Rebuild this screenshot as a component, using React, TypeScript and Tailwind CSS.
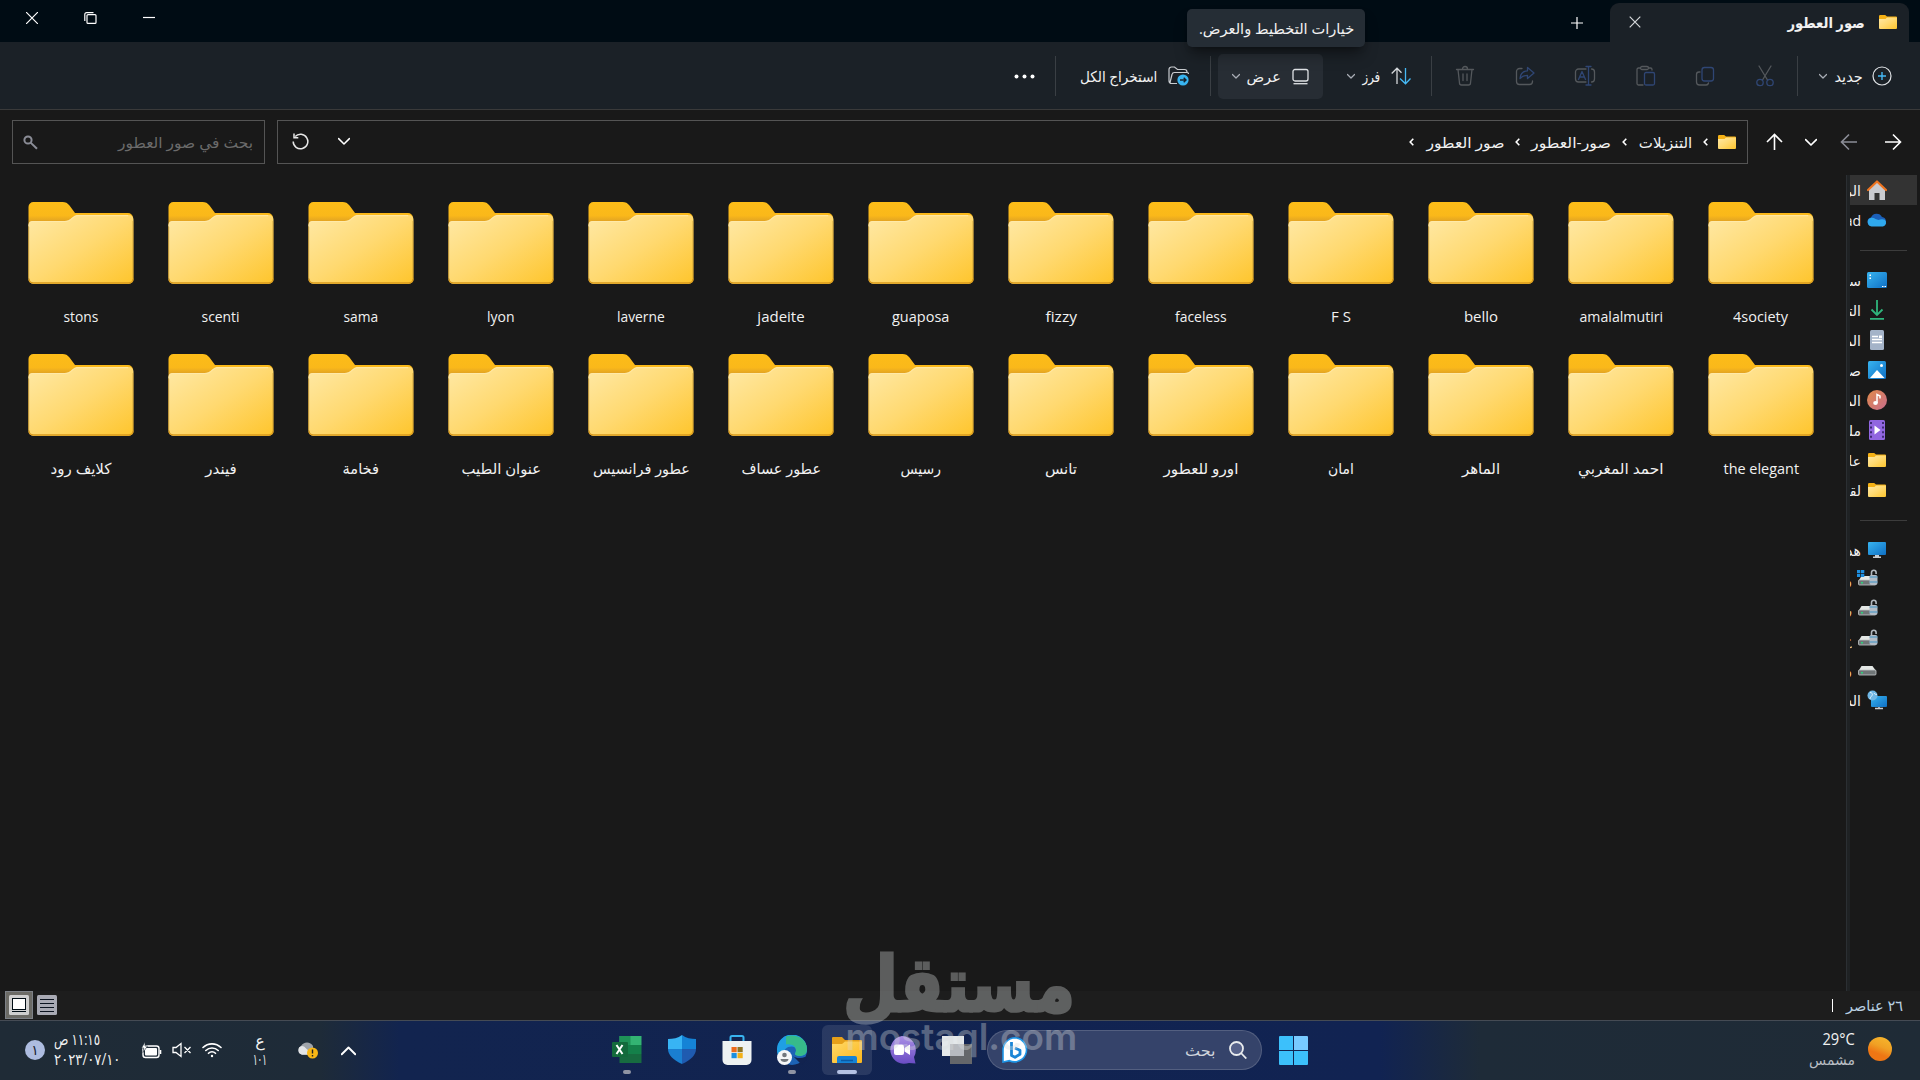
import React, { useLayoutEffect, useRef, useState } from "react";

/* Text squeezed or stretched horizontally so that it spans exactly w pixels. */
function Fit({ w, children, className = "" }: { w: number; children: React.ReactNode; className?: string }) {
  const ref = useRef<HTMLSpanElement>(null);
  const [scale, setScale] = useState(1);
  useLayoutEffect(() => {
    if (ref.current) setScale(w / ref.current.offsetWidth);
  }, [w]);
  return (
    <span className={`inline-flex shrink-0 justify-center ${className}`} style={{ width: w }}>
      <span ref={ref} className="inline-block shrink-0 whitespace-nowrap" style={{ transform: `scaleX(${scale})` }}>
        {children}
      </span>
    </span>
  );
}

function BigFolder() {
  return (
    <svg width="106" height="84" viewBox="0 0 106 84" className="shrink-0">
      <path d="M.5 6a5 5 0 0 1 5-5h29c3 0 5 1 7 3.500L47 12h53a5 5 0 0 1 5 5v60H.5z" fill="url(#fBack)" />
      <path d="M.5 24a4 4 0 0 1 4-4h32c3 0 5-1 7-3l2-1.500c1.500-1 2.500-1.500 4-1.500H101a4.500 4.500 0 0 1 4.500 4.500V78a5 5 0 0 1-5 5H5.500a5 5 0 0 1-5-5z" fill="url(#fFront)" />
      <path d="M1 77.500c0 3 2 4.500 4.500 4.500h95c2.500 0 4.500-1.500 4.500-4.500" fill="none" stroke="#d99a1c" strokeWidth="1.300" />
      <path d="M1 25c0-3 1.500-4.500 4-4.500h32c3 0 5-1 7-3l2-1.500c1.500-1 2.500-1.300 4-1.300h50" fill="none" stroke="#ffe9a8" strokeWidth="1" />
      <path d="M105 20v57M.7 26v51" stroke="#b8892a" strokeWidth=".8" opacity=".7" />
    </svg>
  );
}

function SmallFolder() {
  return (
    <svg width="20" height="16" viewBox="0 0 20 16" className="shrink-0">
      <path d="M1 2.200A1.200 1.200 0 0 1 2.200 1h5l1.800 1.500h9a1 1 0 0 1 1 1V8H1z" fill="#f5b115" />
      <path d="M1 5h6.500L9 3.500h10V14a1 1 0 0 1-1 1H2a1 1 0 0 1-1-1z" fill="url(#fFront)" />
    </svg>
  );
}

function Chev({ s = 8, c = "#a9adb5", sw = 1.3, up = false }: { s?: number; c?: string; sw?: number; up?: boolean }) {
  return (
    <svg width={s} height={s} viewBox="0 0 10 10" fill="none" stroke={c} strokeWidth={(sw * 10) / s} className="shrink-0">
      <path d={up ? "M.5 7.500 5 3l4.500 4.500" : "M.5 3 5 7.500 9.500 3"} strokeLinecap="round" strokeLinejoin="round" />
    </svg>
  );
}

function Crumb() {
  return (
    <svg width="5" height="8" viewBox="0 0 5 8" fill="none" stroke="#fff" strokeWidth="1.600" className="shrink-0">
      <path d="M4.300.8 1.200 4l3.100 3.200" />
    </svg>
  );
}

function Divider({ className }: { className: string }) {
  return <div className={`h-10 w-px shrink-0 bg-[#3a3f44] ${className}`} />;
}

function Ico({ children, s = 24 }: { children: React.ReactNode; s?: number }) {
  return (
    <svg width={s} height={s} viewBox={`0 0 ${s} ${s}`} fill="none" strokeWidth="1.300" strokeLinecap="round" strokeLinejoin="round" className="shrink-0">
      {children}
    </svg>
  );
}

const G = "#54585c";
const B = "#2f4674";

function TitleBar() {
  return (
    <header className="flex h-[42px] items-end bg-[#000c14] pr-[11px]">
      <div className="flex h-[39px] w-[299px] items-center rounded-t-[9px] bg-[#1b2127] pb-px pr-[11px]">
        <SmallFolder />
        <Fit w={77} className="mr-[13px] text-[15px] font-bold leading-[20px]">صور العطور</Fit>
        <svg width="12" height="12" viewBox="0 0 12 12" stroke="#d5d8db" strokeWidth="1.200" className="mr-[147px]">
          <path d="M.7.7l10.600 10.600M11.300.7.7 11.300" />
        </svg>
      </div>
      <svg width="12" height="12" viewBox="0 0 12 12" stroke="#fff" strokeWidth="1.200" className="mb-[13px] mr-[27px]">
        <path d="M6 0v12M0 6h12" />
      </svg>
      <div className="mr-auto flex h-[42px] items-start gap-[46px] pl-[26px] pt-3">
        <svg width="12" height="12" viewBox="0 0 12 12" stroke="#fff" strokeWidth="1.200"><path d="M0 5.500h12" /></svg>
        <svg width="13" height="12" viewBox="0 0 13 12" stroke="#fff" strokeWidth="1.200" fill="none">
          <rect x="3" y="2.600" width="9" height="8.800" rx="1" />
          <path d="M.8 9V2.500C.8 1.300 1.500.6 2.700.6H9.500" />
        </svg>
        <svg width="12" height="12" viewBox="0 0 12 12" stroke="#fff" strokeWidth="1.200"><path d="M0 0l12 12M12 0 0 12" /></svg>
      </div>
    </header>
  );
}

function CommandBar() {
  return (
    <div className="flex h-[68px] items-center border-b border-[#3a3a3a] bg-[#1b2127] pr-[28px] pt-px">
      <svg width="20" height="20" viewBox="0 0 20 20" fill="none" className="shrink-0">
        <circle cx="10" cy="10" r="9" stroke="#dfe2e5" strokeWidth="1.200" />
        <path d="M10 6v8M6 10h8" stroke="#46b9f5" strokeWidth="1.400" />
      </svg>
      <Fit w={28} className="mr-[9px]">جديد</Fit>
      <span className="mr-2 flex"><Chev /></span>
      <Divider className="mr-[21px]" />
      <div className="mr-5 flex gap-9">
        <Ico>
          <path d="M6 2l8.500 14M18 2 9.500 16" stroke={G} />
          <circle cx="7" cy="18.500" r="3.200" stroke={B} /><circle cx="17" cy="18.500" r="3.200" stroke={B} />
        </Ico>
        <Ico>
          <path d="M7 8H6a2.500 2.500 0 0 0-2.500 2.500V18A3 3 0 0 0 6.500 21H13a2.500 2.500 0 0 0 2.500-2" stroke={G} />
          <rect x="9" y="3.500" width="11.500" height="13.500" rx="2.500" stroke={B} />
        </Ico>
        <Ico>
          <path d="M7 4H5.500A1.500 1.500 0 0 0 4 5.500v14A1.500 1.500 0 0 0 5.500 21H10M16 4h1.500A1.500 1.500 0 0 1 19 5.500V6" stroke={G} />
          <rect x="7.500" y="2.500" width="8" height="3" rx="1.500" stroke={G} />
          <rect x="11.500" y="8.500" width="10" height="12.500" rx="1.500" stroke={B} />
        </Ico>
        <Ico>
          <path d="M13 5H5.500A3 3 0 0 0 2.500 8v7a3 3 0 0 0 3 3H13M18.500 5a3 3 0 0 1 3 3v7a3 3 0 0 1-3 3" stroke={G} />
          <path d="M5.500 15.500 9 7.500l3.500 8M6.700 13h4.600M15.500 3v18M13 2.500h5M13 21h5" stroke={B} />
        </Ico>
        <Ico>
          <path d="M9 4.500H6.500A3 3 0 0 0 3.500 7.500v10a3 3 0 0 0 3 3h10a3 3 0 0 0 3-3V17" stroke={G} />
          <path d="M14.500 3.500 21 9l-6.500 5.500v-3.200c-3.500 0-5.500 1-7.500 3.200.3-4.500 2.800-7.300 7.500-7.700z" stroke={B} />
        </Ico>
        <Ico>
          <path d="M3.500 5.500h17M5 5.500l1.500 13.500A2 2 0 0 0 8.500 21h7a2 2 0 0 0 2-2L19 5.500M9.500 5a2.500 2.500 0 0 1 5 0M10 10v6.500M14 10v6.500" stroke={G} />
        </Ico>
      </div>
      <Divider className="mr-[21px]" />
      <svg width="20" height="18" viewBox="0 0 20 18" fill="none" strokeWidth="1.300" className="mr-5 shrink-0">
        <path d="M6 17V1.500M.7 6.500 6 1.200l4.500 4.500" stroke="#d5d8db" />
        <path d="M14.500 1v15.500M9 11.500l5.500 5.300 5-5.300" stroke="#46b9f5" />
      </svg>
      <Fit w={18} className="mr-[11px]">فرز</Fit>
      <span className="mr-[7px] flex"><Chev /></span>
      <div className="mr-6 flex h-[45px] w-[105px] items-center rounded-[5px] bg-[#272d34] pr-[14px]">
        <svg width="17" height="17" viewBox="0 0 17 17" fill="none" stroke="#dfe2e5" strokeWidth="1.300">
          <rect x="1" y="1.500" width="15" height="11.500" rx="2" /><path d="M1.500 15.700h14" />
        </svg>
        <Fit w={34} className="mr-[11px]">عرض</Fit>
        <span className="mr-[7px] flex"><Chev /></span>
      </div>
      <Divider className="mr-[7px]" />
      <svg width="21" height="20" viewBox="0 0 21 20" fill="none" className="mr-[21px] shrink-0">
        <path d="M9 17.500H3.500a2.500 2.500 0 0 1-2.500-2.500V3.500A2.500 2.500 0 0 1 3.500 1h3l3 2.500h7A2.500 2.500 0 0 1 19 6M2 16.500 4 8.500A2.500 2.500 0 0 1 6.500 6.500h12.500a1.500 1.500 0 0 1 1.500 1.500" stroke="#c9ccd0" strokeWidth="1.200" />
        <circle cx="15" cy="14" r="5.600" fill="#38b4f0" />
        <path d="M12 14h6M15.700 11.700 18 14l-2.300 2.300" stroke="#14222c" strokeWidth="1.400" />
      </svg>
      <Fit w={77} className="mr-[11px]">استخراج الكل</Fit>
      <Divider className="mr-[24px]" />
      <svg width="21" height="5" viewBox="0 0 21 5" fill="#fff" className="mr-5">
        <circle cx="2.500" cy="2.500" r="2" /><circle cx="10.500" cy="2.500" r="2" /><circle cx="18.500" cy="2.500" r="2" />
      </svg>
    </div>
  );
}

function AddressRow() {
  return (
    <div className="flex h-[65px] items-center pb-px pr-[18px]">
      <svg width="18" height="18" viewBox="0 0 18 18" fill="none" stroke="#fff" strokeWidth="1.600"><path d="M1 9h15.500M9 1.500 16.500 9 9 16.500" /></svg>
      <svg width="18" height="18" viewBox="0 0 18 18" fill="none" stroke="#8b8d97" strokeWidth="1.600" className="mr-[26px]"><path d="M17 9H1.500M9 1.500 1.500 9 9 16.500" /></svg>
      <span className="mr-[23px] flex"><Chev s={12} c="#fff" sw={1.7} /></span>
      <svg width="17" height="18" viewBox="0 0 17 18" fill="none" stroke="#fff" strokeWidth="1.600" className="mr-[22px]"><path d="M8.500 17V1.500M1 9l7.500-7.500L16 9" /></svg>
      <div className="mr-[18px] flex h-[44px] w-[1471px] items-center border border-[#545454] pr-[10px]">
        <SmallFolder />
        <span className="mr-[9px] flex"><Crumb /></span>
        <Fit w={53} className="mb-px mr-[11px]">التنزيلات</Fit>
        <span className="mr-[12px] flex"><Crumb /></span>
        <Fit w={80} className="mb-px mr-[11px]">صور-العطور</Fit>
        <span className="mr-[11px] flex"><Crumb /></span>
        <Fit w={78} className="mb-px mr-[11px]">صور العطور</Fit>
        <span className="mr-[12px] flex"><Crumb /></span>
        <div className="mb-0.5 mr-auto flex items-center gap-[29px] pl-[14px]">
          <Chev s={12} c="#fff" sw={1.5} />
          <svg width="17" height="17" viewBox="0 0 17 17" fill="none" stroke="#e8e8e8" strokeWidth="1.500">
            <path d="M3.200 3.500a7.300 7.300 0 1 1-2 5" /><path d="M2 .5v4.200h4.300" />
          </svg>
        </div>
      </div>
      <div className="mr-3 flex h-[44px] w-[253px] items-center justify-between border border-[#545454] pl-[10px] pr-[11px]">
        <Fit w={135} className="text-[#6b6b6b]">بحث في صور العطور</Fit>
        <svg width="15" height="15" viewBox="0 0 15 15" fill="none" stroke="#8b8d97" strokeWidth="2">
          <circle cx="5" cy="5" r="3.600" /><path d="M7.600 7.600 14 13.800" />
        </svg>
      </div>
    </div>
  );
}

const rowOne: [string, number][] = [
  ["4society", 55], ["amalalmutiri", 84], ["bello", 34], ["F S", 20], ["faceless", 52], ["fizzy", 31], ["guaposa", 57],
  ["jadeite", 47], ["laverne", 48], ["lyon", 28], ["sama", 35], ["scenti", 38], ["stons", 35],
];
const rowTwo: [string, number][] = [
  ["the elegant", 76], ["احمد المغربي", 85], ["الماهر", 38], ["امان", 26], ["اورو للعطور", 75], ["تانس", 32], ["رسيس", 40],
  ["عطور عساف", 80], ["عطور فرانسيس", 97], ["عنوان الطيب", 80], ["فخامة", 37], ["فيندر", 31], ["كلايف رود", 61],
];

function Drive({ lock = false, win = false }: { lock?: boolean; win?: boolean }) {
  return (
    <svg width="22" height="20" viewBox="0 0 22 20" className="mb-1 shrink-0">
      <path d="M4.500 8h11l3.500 5H1.500z" fill="#e4e8e6" />
      <rect x="1.500" y="12" width="17.500" height="5" rx="1" fill="#6f7577" stroke="#c3c7c8" strokeWidth=".8" />
      <rect x="4" y="14" width="2" height="1.500" fill="#2fd07c" />
      {lock && (
        <>
          <path d="M14.500 9V4.500a2.300 2.300 0 0 1 4.600 0V6" fill="none" stroke="#b3b9bf" strokeWidth="1.600" />
          <rect x="12.500" y="7" width="8" height="10" rx="2" fill="#b4bcc5" />
          <path d="M12.500 9h8M12.500 14h8" stroke="#3e93c4" strokeWidth="1" />
        </>
      )}
      {win && <path d="M0 2h3.300v3H0zM4 2h3.300v3H4zM0 5.700h3.300V9H0zM4 5.700h3.300V9H4z" fill="#1e8fe0" />}
    </svg>
  );
}

const navIcons: Record<string, React.ReactNode> = {
  home: (
    <svg width="20" height="20" viewBox="0 0 20 20">
      <path d="M2 8.500 10 1.500l8 7V20h-5.500v-7h-5v7H2z" fill="#c9cbd0" />
      <path d="M1 10 10 1.500 19 10" fill="none" stroke="#ee7420" strokeWidth="2.200" strokeLinecap="round" strokeLinejoin="round" />
    </svg>
  ),
  cloud: (
    <svg width="20" height="14" viewBox="0 0 20 14">
      <path d="M4.500 13A4.300 4.300 0 0 1 4 4.500 6 6 0 0 1 15 4a4.600 4.600 0 0 1 .5 9z" fill="#1b5fb8" />
      <path d="M4.500 13.500a4.500 4.500 0 0 1-1-8.600c2-.4 3.500 0 5 1l3 1.200c1.500-.8 4-1.300 6.300-.3a3.900 3.900 0 0 1-1.800 6.700z" fill="#2fa8ec" />
    </svg>
  ),
  desktop: (
    <svg width="20" height="16" viewBox="0 0 20 16">
      <rect width="20" height="16" rx="1.500" fill="url(#blueG)" /><path d="M2.500 2.500h1.500v1.500H2.500zM2.500 5.500h1.500v1.500H2.500z" fill="#fff" /><path d="M15 14.500h1.500M17.500 14.500H19" stroke="#fff" />
    </svg>
  ),
  down: (
    <svg width="16" height="20" viewBox="0 0 16 20" fill="none" stroke="#2fb67c" strokeWidth="1.800"><path d="M8 0v15M2.500 9.500 8 15l5.500-5.500M1 18.800h14" /></svg>
  ),
  docs: (
    <svg width="14" height="20" viewBox="0 0 14 20">
      <rect width="14" height="20" rx="1.500" fill="#a4b3c8" /><path d="M2 6.500h6M2 9.500h10M2 12.500h10" stroke="#fff" strokeWidth="1.300" /><rect x="9" y="5.500" width="3" height="2.500" fill="#fff" />
    </svg>
  ),
  pics: (
    <svg width="18" height="18" viewBox="0 0 18 18">
      <rect width="18" height="18" rx="1.500" fill="url(#blueG)" /><path d="M2 17 9 9l7.500 8z" fill="#fff" /><circle cx="13.500" cy="4.500" r="1.500" fill="#fff" />
    </svg>
  ),
  music: (
    <svg width="20" height="20" viewBox="0 0 20 20">
      <circle cx="10" cy="10" r="10" fill="url(#musG)" /><ellipse cx="8.500" cy="13" rx="2.300" ry="2" fill="#fff" /><path d="M10 13V4.500l3 1.500v2.500" fill="none" stroke="#fff" strokeWidth="1.500" />
    </svg>
  ),
  video: (
    <svg width="16" height="20" viewBox="0 0 16 20">
      <rect width="16" height="20" rx="1.500" fill="#9166e0" /><path d="M2 2v17M14 2v17" stroke="#3f2b73" strokeWidth="2" strokeDasharray="2 2.600" /><path d="M5.500 5.500 11.500 10l-6 4.500z" fill="#fff" />
    </svg>
  ),
  folder: <SmallFolder />,
  pc: (
    <svg width="18" height="16" viewBox="0 0 18 16">
      <rect width="18" height="13" rx="1" fill="url(#blueG)" /><path d="M7 13h4v1.500h2V16H5v-1.500h2z" fill="#c9cdd1" />
    </svg>
  ),
  net: (
    <svg width="20" height="20" viewBox="0 0 20 20">
      <rect x="4" y="6" width="16" height="11" rx="1" fill="url(#blueG)" /><path d="M8 18.500h8M12 17v2" stroke="#c9cdd1" strokeWidth="1.500" />
      <circle cx="5.500" cy="5.500" r="5" fill="#6fb7e6" /><path d="M3 2.500c2 0 3 1.500 2 3S3 7.500 3 9M7 3c1 1.500 2 1.500 3 1.500" stroke="#e6f2fa" fill="none" />
    </svg>
  ),
};

function NavItem({ icon, label, active = false }: { icon: string; label: string; active?: boolean }) {
  return (
    <div className={`flex h-[30px] shrink-0 items-center pr-[30px] ${active ? "bg-[#333333]" : ""}`}>
      <span className="flex w-5 shrink-0 justify-center">{navIcons[icon]}</span>
      <span className="mr-[6px] mt-px w-[11px] shrink-0 overflow-hidden whitespace-nowrap text-[14px] leading-[22px]">{label}</span>
    </div>
  );
}

function DriveItem({ label, lock, win }: { label: string; lock?: boolean; win?: boolean }) {
  return (
    <div className="flex h-[30px] shrink-0 items-center pr-[38px]">
      <Drive lock={lock} win={win} />
      <span className="mr-[5px] w-[2px] overflow-hidden whitespace-nowrap text-[14px] leading-[22px] text-[#e9c38d]">{label}</span>
    </div>
  );
}

function Sidebar() {
  return (
    <nav className="flex w-[67px] shrink-0 flex-col">
      <NavItem icon="home" label="الرئيسية" active />
      <div className="flex h-[30px] shrink-0 items-center pr-[30px]">
        <span className="flex w-5 justify-center">{navIcons.cloud}</span>
        <span dir="ltr" className="mr-[6px] mt-px flex w-[11px] justify-end overflow-hidden text-[14px] leading-[22px]"><span className="shrink-0">ahmad</span></span>
      </div>
      <div className="mb-[14px] mr-[10px] mt-[15px] h-px w-[47px] shrink-0 bg-[#3c3c3c]" />
      <NavItem icon="desktop" label="سطح المكتب" />
      <NavItem icon="down" label="التنزيلات" />
      <NavItem icon="docs" label="المستندات" />
      <NavItem icon="pics" label="صور" />
      <NavItem icon="music" label="الموسيقى" />
      <NavItem icon="video" label="ملفات" />
      <NavItem icon="folder" label="عام" />
      <NavItem icon="folder" label="لقطات" />
      <div className="mb-[14px] mr-[10px] mt-[15px] h-px w-[47px] shrink-0 bg-[#3c3c3c]" />
      <NavItem icon="pc" label="هذا الكمبيوتر" />
      <DriveItem label="و" lock win />
      <DriveItem label="ر" lock />
      <DriveItem label="ج" lock />
      <DriveItem label="و" />
      <NavItem icon="net" label="الشبكة" />
    </nav>
  );
}

function FolderRow({ items }: { items: [string, number][] }) {
  return (
    <>
      {items.map(([name, w]) => (
        <div key={name} className="flex h-[152px] flex-col items-center">
          <BigFolder />
          <Fit w={w} className="mt-[21px] text-[15px] leading-[20px]">{name}</Fit>
        </div>
      ))}
    </>
  );
}

function StatusBar() {
  return (
    <div className="flex h-[29px] items-center bg-[#1d1d1d] pb-px pr-[17px]">
      <Fit w={57} className="text-[15px] leading-[20px] text-[#b9d0e2]">٢٦ عناصر</Fit>
      <div className="mr-[13px] h-[13px] w-px bg-white" />
      <div className="mr-auto flex items-center gap-1 pl-[5px]">
        <svg width="20" height="20" viewBox="0 0 20 20">
          <rect width="20" height="20" rx="1.500" fill="#a9aab4" /><path d="M3 4.500h14M3 8.500h14M3 12.500h14M3 16.500h14" stroke="#0c1420" />
        </svg>
        <div className="flex h-7 w-7 items-center justify-center border border-[#7d8187] bg-[#6c6b66]">
          <svg width="20" height="20" viewBox="0 0 20 20">
            <rect width="20" height="20" rx="1.500" fill="#cfcfcf" /><rect x="3.500" y="3.500" width="13" height="11" fill="#fff" stroke="#000c14" /><path d="M3 16.500h14" stroke="#000c14" />
          </svg>
        </div>
      </div>
    </div>
  );
}

function AppSlot({ children, active = false, dot = false }: { children: React.ReactNode; active?: boolean; dot?: boolean }) {
  return (
    <div className={`flex h-[50px] w-[50px] flex-col items-center rounded-md pt-[10px] ${active ? "bg-white/10" : ""}`}>
      <svg width="30" height="30" viewBox="0 0 30 30" className="shrink-0">{children}</svg>
      {dot && <div className="mt-[5px] h-1 w-2 shrink-0 rounded-full bg-[#8f94a3]" />}
      {active && <div className="mt-[5px] h-1 w-5 shrink-0 rounded-full bg-[#b4c2e4]" />}
    </div>
  );
}

function Taskbar() {
  return (
    <footer className="flex h-[60px] items-center border-t border-[#454b54] bg-[linear-gradient(90deg,#1f2b36_0px,#1e2b38_320px,#12244f_400px,#112352_1380px,#1e2b38_1480px,#1f2b36_100%)] pb-px pr-[28px]">
      <svg width="24" height="24" viewBox="0 0 24 24" className="mb-[3px] shrink-0"><circle cx="12" cy="12" r="12" fill="url(#sunG)" /></svg>
      <div className="mb-[3px] mr-[13px] flex w-[46px] flex-col items-start">
        <Fit w={32} className="text-[16px] leading-[22px]"><span dir="ltr">29°C</span></Fit>
        <Fit w={46} className="text-[14px] leading-[20px] text-[#b9bec4]">مشمس</Fit>
      </div>
      <svg width="29" height="29" viewBox="0 0 29 29" className="mr-[501px] shrink-0">
        <path d="M0 1a1 1 0 0 1 1-1h13v14H0zM0 15h14v14H1a1 1 0 0 1-1-1zM15 15h14v13a1 1 0 0 1-1 1H15z" fill="#3cc0fb" /><path d="M15 0h13a1 1 0 0 1 1 1v13H15z" fill="#78caff" />
      </svg>
      <div className="mr-[17px] flex h-10 w-[275px] shrink-0 items-center rounded-full border border-white/15 bg-[#35436a] pl-[14px] pr-[14px]">
        <svg width="18" height="18" viewBox="0 0 18 18" fill="#56628a" stroke="#e9ecee" strokeWidth="1.800"><circle cx="7.500" cy="7.500" r="6.500" /><path d="m12 12 5.300 5.500" /></svg>
        <Fit w={31} className="mr-[13px] text-[15px] leading-[20px] text-[#cfd4dc]">بحث</Fit>
        <svg width="26" height="26" viewBox="0 0 26 26" className="mr-auto">
          <path d="M13 .8a12 12 0 1 1-5.500 22.900L1 25V13A12.200 12.200 0 0 1 13 .8z" fill="#fff" stroke="#1f96e8" strokeWidth="1.600" />
          <path d="M9.500 5v13.500l3.500 1.800 5-3v-4l-5-2.300" fill="none" stroke="#1c86d6" strokeWidth="2.800" strokeLinejoin="round" />
        </svg>
      </div>
      <div className="mr-[5px] flex shrink-0 gap-[5px]">
        <AppSlot>
          <rect x="8" y="9" width="22" height="20" fill="#65676a" /><rect x="0" y="1" width="22" height="20" fill="#e4e8ea" /><rect x="8" y="9" width="14" height="12" fill="#b7babf" />
        </AppSlot>
        <AppSlot>
          <path d="M15 1a14 14 0 0 1 12 21l1.500 6.500L22 28A14 14 0 1 1 15 1z" fill="url(#chatG)" /><rect x="7" y="9.500" width="10" height="10.500" rx="2" fill="#fff" /><path d="m17.500 13 5.500-3.500v10.500l-5.500-3.500z" fill="#fff" />
        </AppSlot>
        <AppSlot active>
          <path d="M0 3a1 1 0 0 1 1-1h9l3 3h16a1 1 0 0 1 1 1v9H0z" fill="#e6a01a" /><path d="M0 9h10l3-2.500h17V27a1 1 0 0 1-1 1H1a1 1 0 0 1-1-1z" fill="url(#expG)" /><path d="M5 28v-5a2 2 0 0 1 2-2h16a2 2 0 0 1 2 2v5z" fill="#1583d6" /><path d="M9 25.500h12" stroke="#0b5aa5" strokeWidth="1.500" />
        </AppSlot>
        <AppSlot dot>
          <circle cx="15" cy="15" r="15" fill="#1d63b5" /><path d="M0 15A15 15 0 0 1 30 14c0 5-3 7-7.500 7-3.500 0-5.500-1.500-4-3.500 1.500-3 0-6-4-6C8 11.500 4 18 8 27 3 25 0 20 0 15z" fill="#1f9fe4" />
          <path d="M9 1.500C18-2 30 3 30 14c0 5-3 7-7.500 7-3.500 0-5.500-1.500-4-3.500 1.500-4-1-9-9.500-8z" fill="#3cc07a" opacity=".85" />
          <path d="M16 21c3 2.500 8 2.500 12 1l2 2-5 6z" fill="#12234f" />
          <circle cx="7.500" cy="22.500" r="7.500" fill="#f4f6f8" /><circle cx="7.500" cy="20" r="2.300" fill="#72777d" /><path d="M3.500 24h8c0 4-8 4-8 0z" fill="#72777d" />
        </AppSlot>
        <AppSlot>
          <path d="M8.500 7V2.500A1.500 1.500 0 0 1 10 1h10a1.500 1.500 0 0 1 1.500 1.500V7" fill="none" stroke="#38b4f0" strokeWidth="2" /><path d="M.5 6h29v19a5 5 0 0 1-5 5h-19a5 5 0 0 1-5-5z" fill="#eef2f2" />
          <rect x="9.500" y="12" width="5.200" height="5.200" fill="#ee6c1c" /><rect x="15.500" y="12" width="5.200" height="5.200" fill="#8f7424" /><rect x="9.500" y="18" width="5.200" height="5.200" fill="#1c8fe0" /><rect x="15.500" y="18" width="5.200" height="5.200" fill="#f3b118" />
        </AppSlot>
        <AppSlot>
          <path d="M15 0c4 3 9 4 14 4v10H15z" fill="#1583d6" /><path d="M15 0C11 3 6 4 1 4v10h14z" fill="#38b4f4" /><path d="M1 14h14v15C6 25 1 20 1 14z" fill="#1a7fd0" /><path d="M29 14H15v15c9-4 14-9 14-15z" fill="#1f5bb0" />
        </AppSlot>
        <AppSlot dot>
          <rect x="7.500" y="1" width="22" height="9" fill="#33b473" /><path d="M7.500 1h11v9h-11z" fill="#1e9257" /><rect x="7.500" y="10" width="22" height="9" fill="#14804a" /><rect x="7.500" y="19" width="22" height="9" fill="#176b40" />
          <rect x="0" y="7" width="16" height="15" rx="1" fill="#136a3c" /><path d="m4.500 10 6 9M10.500 10l-6 9" stroke="#fff" strokeWidth="2" />
        </AppSlot>
      </div>
      <div className="mr-auto flex shrink-0 items-center pl-[25px]">
        <Chev s={15} c="#fff" sw={1.9} up />
        <svg width="22" height="18" viewBox="0 0 22 18" className="mr-[22px]">
          <path d="M5 14A5 5 0 0 1 4 5a7 7 0 0 1 12 0v9z" fill="#9fa4aa" /><path d="M5 13.500A4.300 4.300 0 0 1 5 5c3 0 4 3 6 4v4.500z" fill="#e3e5e7" />
          <circle cx="15.500" cy="12" r="5.500" fill="#f9b715" /><path d="M15.500 8.500v4M15.500 14v1.500" stroke="#222" strokeWidth="1.400" />
        </svg>
        <div className="mr-[27px] flex w-5 flex-col items-center text-[16px] leading-[19px]">
          <span>ع</span>
          <Fit w={14}>١٠١</Fit>
        </div>
        <svg width="20" height="16" viewBox="0 0 20 16" fill="none" stroke="#fff" strokeWidth="1.600" strokeLinecap="round" className="mr-7">
          <path d="M1 5.500a13 13 0 0 1 18 0M3.800 8.500a9 9 0 0 1 12.400 0M6.500 11.300a5 5 0 0 1 7 0" /><circle cx="10" cy="14" r="1.200" fill="#fff" stroke="none" />
        </svg>
        <svg width="20" height="16" viewBox="0 0 20 16" fill="none" stroke="#fff" strokeWidth="1.300" className="mr-[10px]">
          <path d="M1 5.500h3L9 1.500v13L4 10.500H1zM12.500 5l6 6M18.500 5l-6 6" />
        </svg>
        <svg width="21" height="17" viewBox="0 0 21 17" className="mr-[10px]">
          <rect x="2" y="4" width="16" height="11.500" rx="2.500" fill="none" stroke="#fff" strokeWidth="1.400" /><rect x="4" y="6" width="12" height="7.500" rx="1" fill="#fff" /><path d="M19.500 8v4" stroke="#fff" strokeWidth="1.600" />
          <path d="M4 0 .5 6h2.300L2 10.500 6.500 4H4z" fill="#fff" stroke="#1e2b38" strokeWidth=".6" />
        </svg>
        <div dir="ltr" className="mb-0.5 mr-[20px] flex w-[67px] flex-col items-start text-[16px] leading-[20px]">
          <Fit w={46}><span dir="rtl">١١:١٥ ص</span></Fit>
          <Fit w={66}><span dir="ltr">٢٠٢٣/٠٧/١٠</span></Fit>
        </div>
        <div className="mr-[9px] flex h-5 w-5 items-center justify-center rounded-full bg-[#adbce0] text-[14px] leading-none text-[#1b2430]">١</div>
      </div>
    </footer>
  );
}

function Gradients() {
  return (
    <svg className="absolute h-0 w-0">
      <defs>
        <linearGradient id="fFront" x1="0" y1="0" x2="1" y2="1"><stop offset="0" stopColor="#ffe9a6" /><stop offset=".5" stopColor="#ffd970" /><stop offset="1" stopColor="#fec52c" /></linearGradient>
        <linearGradient id="fBack" x1="0" y1="0" x2="0" y2="1"><stop offset="0" stopColor="#fdbd18" /><stop offset=".18" stopColor="#fab81a" /><stop offset=".25" stopColor="#e3a422" /><stop offset="1" stopColor="#ecaa1c" /></linearGradient>
        <linearGradient id="blueG" x1="0" y1="0" x2="1" y2="1"><stop offset="0" stopColor="#38b4f0" /><stop offset="1" stopColor="#0f6fc4" /></linearGradient>
        <linearGradient id="musG" x1="0" y1="0" x2="1" y2="1"><stop offset="0" stopColor="#e08a4a" /><stop offset="1" stopColor="#c86c8c" /></linearGradient>
        <linearGradient id="sunG" x1=".7" y1="0" x2=".3" y2="1"><stop offset="0" stopColor="#f6b52c" /><stop offset=".4" stopColor="#f0a024" /><stop offset=".7" stopColor="#ee7614" /></linearGradient>
        <linearGradient id="chatG" x1="0" y1="0" x2="0" y2="1"><stop offset="0" stopColor="#a98fe6" /><stop offset="1" stopColor="#6a4cc4" /></linearGradient>
        <linearGradient id="expG" x1="0" y1="0" x2="1" y2="1"><stop offset="0" stopColor="#ffd968" /><stop offset="1" stopColor="#fcb71c" /></linearGradient>
      </defs>
    </svg>
  );
}

export default function App() {
  return (
    <div dir="rtl" className="relative flex h-[1080px] w-[1920px] flex-col overflow-hidden bg-[#191919] font-['Open_Sans','DejaVu_Sans',sans-serif] text-[15px] leading-[20px] text-[#f1f1f1]">
      <Gradients />
      <TitleBar />
      <CommandBar />
      <AddressRow />
      <div className="flex min-h-0 flex-1 pr-[3px]">
        <Sidebar />
        <div className="w-[4px] shrink-0 border-l border-[#2b2f33] bg-[#1f2224]" />
        <main className="mr-[15px] grid w-[1820px] shrink-0 auto-rows-[152px] grid-cols-13 content-start pt-[26px]">
          <FolderRow items={rowOne} />
          <FolderRow items={rowTwo} />
        </main>
      </div>
      <StatusBar />
      <Taskbar />
      <div className="absolute left-[1187px] top-[9px] flex h-[38px] w-[178px] items-center justify-center rounded-[5px] bg-[#252d35] pb-px pl-px shadow-lg shadow-black/40">
        <Fit w={155}>خيارات التخطيط والعرض.</Fit>
      </div>
      <div className="absolute left-[845px] top-[945px] flex w-[230px] flex-col font-bold text-[#d8dcdc] opacity-35">
        <Fit w={232} className="font-['DejaVu_Sans',sans-serif] text-[76px] leading-[80px] [-webkit-text-stroke:3px_#d8dcdc]">مستقل</Fit>
        <span dir="ltr" className="-mt-[8px] flex"><Fit w={232} className="font-['Inter',sans-serif] text-[37px] font-semibold leading-[40px]">mostaql.com</Fit></span>
      </div>
    </div>
  );
}
